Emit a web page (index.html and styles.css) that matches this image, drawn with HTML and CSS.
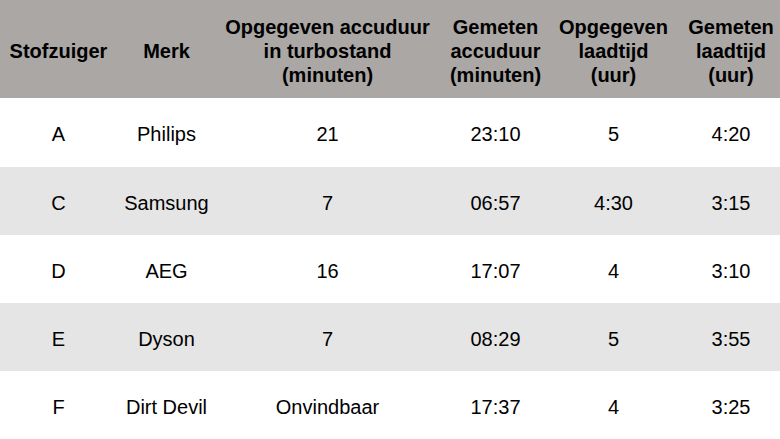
FILE: index.html
```html
<!DOCTYPE html>
<html lang="nl">
<head>
<meta charset="utf-8">
<title>Stofzuigers</title>
<link rel="stylesheet" href="styles.css">
</head>
<body>
<table class="tbl">
  <colgroup>
    <col class="c1"><col class="c2"><col class="c3"><col class="c4"><col class="c5"><col class="c6">
  </colgroup>
  <thead>
    <tr>
      <th>Stofzuiger</th>
      <th>Merk</th>
      <th>Opgegeven accuduur<br>in turbostand<br>(minuten)</th>
      <th>Gemeten<br>accuduur<br>(minuten)</th>
      <th>Opgegeven<br>laadtijd<br>(uur)</th>
      <th class="last">Gemeten<br>laadtijd<br>(uur)</th>
    </tr>
  </thead>
  <tbody>
    <tr class="first"><td>A</td><td>Philips</td><td>21</td><td>23:10</td><td>5</td><td class="last">4:20</td></tr>
    <tr class="alt"><td>C</td><td>Samsung</td><td>7</td><td>06:57</td><td>4:30</td><td class="last">3:15</td></tr>
    <tr><td>D</td><td>AEG</td><td>16</td><td>17:07</td><td>4</td><td class="last">3:10</td></tr>
    <tr class="alt"><td>E</td><td>Dyson</td><td>7</td><td>08:29</td><td>5</td><td class="last">3:55</td></tr>
    <tr><td>F</td><td>Dirt Devil</td><td>Onvindbaar</td><td>17:37</td><td>4</td><td class="last">3:25</td></tr>
  </tbody>
</table>
</body>
</html>
```

FILE: styles.css
```css
html, body {
  margin: 0;
  padding: 0;
  background: #ffffff;
}
.tbl {
  width: 780px;
  border-collapse: collapse;
  table-layout: fixed;
  font-family: "Liberation Sans", Arial, sans-serif;
  font-size: 20px;
  color: #000000;
}
.c1 { width: 117px; }
.c2 { width: 99px; }
.c3 { width: 223px; }
.c4 { width: 113px; }
.c5 { width: 123px; }
.c6 { width: 105px; }
.tbl th {
  background: #aaa7a5;
  font-weight: bold;
  line-height: 24px;
  height: 98px;
  padding: 4px 0 0 0;
  box-sizing: border-box;
  text-align: center;
  vertical-align: middle;
  white-space: nowrap;
}
.tbl td {
  height: 68px;
  padding: 3px 0 0 0;
  box-sizing: border-box;
  text-align: center;
  vertical-align: middle;
  line-height: 24px;
  white-space: nowrap;
}
.tbl .last { padding-left: 7px; }
.tbl tr.first td { height: 69px; }
.tbl tr.alt td { background: #e5e5e5; }
```
